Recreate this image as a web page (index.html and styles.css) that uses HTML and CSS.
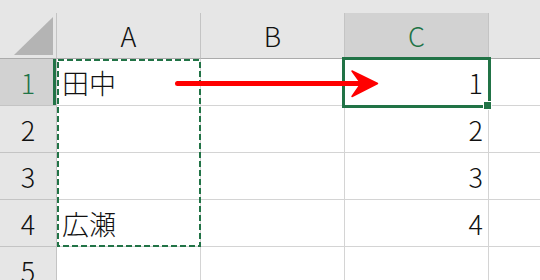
FILE: index.html
```html
<!DOCTYPE html>
<html lang="ja">
<head>
    <meta charset="UTF-8">
    <title>Sheet1</title>
    <link rel="stylesheet" href="styles.css">
</head>
<body>
    <div class="sheet">
        <div class="top-strip"></div>
        <div class="grid">
            <div class="corner">
                <svg width="56" height="45" viewBox="0 0 56 45">
                    <polygon points="53,4 53,42 14,42" fill="#b4b4b4"/>
                </svg>
            </div>
            <div class="col-head">A</div>
            <div class="col-head">B</div>
            <div class="col-head active">C</div>
            <div class="col-head last"></div>

            <div class="row-head active">1</div>
            <div class="cell">田中</div>
            <div class="cell"></div>
            <div class="cell num">1</div>
            <div class="cell last"></div>

            <div class="row-head">2</div>
            <div class="cell"></div>
            <div class="cell"></div>
            <div class="cell num">2</div>
            <div class="cell last"></div>

            <div class="row-head">3</div>
            <div class="cell"></div>
            <div class="cell"></div>
            <div class="cell num">3</div>
            <div class="cell last"></div>

            <div class="row-head">4</div>
            <div class="cell">広瀬</div>
            <div class="cell"></div>
            <div class="cell num">4</div>
            <div class="cell last"></div>

            <div class="row-head">5</div>
            <div class="cell"></div>
            <div class="cell"></div>
            <div class="cell"></div>
            <div class="cell last"></div>
        </div>

        <!-- copy range, active cell and the arrow between them -->
        <svg class="overlay" width="540" height="280" viewBox="0 0 540 280">
            <rect x="58" y="60" width="142" height="186" fill="none" stroke="#217346" stroke-width="2" stroke-dasharray="6 3"/>
            <rect x="343.5" y="58.5" width="146" height="48" fill="none" stroke="#217346" stroke-width="3"/>
            <rect x="483.5" y="101.5" width="8" height="8" fill="#217346" stroke="#fff" stroke-width="1"/>
            <line x1="177.5" y1="83.5" x2="362" y2="83.5" stroke="#ff0000" stroke-width="5" stroke-linecap="round"/>
            <polygon points="352,71 377.5,83.5 352,96.5 361,83.5" fill="#ff0000" stroke="#ff0000" stroke-width="1.5" stroke-linejoin="round"/>
        </svg>
    </div>
</body>
</html>
```

FILE: styles.css
```css
body {
    margin: 0;
    background: #fff;
    font-family: "Noto Sans CJK JP", "Noto Sans", sans-serif;
    font-weight: 300;
    color: #111;
}

.sheet {
    position: relative;
    width: 540px;
    height: 280px;
    overflow: hidden;
}

.top-strip {
    height: 13px;
    background: #e6e6e6;
}

.grid {
    display: grid;
    grid-template-columns: 57px 144px 144px 144px 1fr;
    grid-template-rows: 46px repeat(5, 47px);
}

.grid > div {
    box-sizing: border-box;
    display: flex;
    align-items: center;
    font-size: 27px;
    line-height: 1;
}

.corner {
    background: #e6e6e6;
    border-right: 1px solid #c4c4c4;
    border-bottom: 1px solid #ababab;
}

.corner svg {
    display: block;
}

.col-head {
    justify-content: center;
    background: #e6e6e6;
    border-right: 1px solid #c4c4c4;
    border-bottom: 1px solid #ababab;
}

.col-head.active {
    background: #d2d2d2;
    color: #217346;
}

.row-head {
    justify-content: center;
    background: #e6e6e6;
    border-right: 1px solid #c4c4c4;
    border-bottom: 1px solid #c4c4c4;
}

.row-head.active {
    background: #d2d2d2;
    color: #217346;
    box-shadow: inset -3px 0 #217346;
}

.cell {
    padding: 0 5px;
    background: #fff;
    border-right: 1px solid #d4d4d4;
    border-bottom: 1px solid #d4d4d4;
}

.cell.num {
    justify-content: flex-end;
}

.last {
    border-right: none;
}

.overlay {
    position: absolute;
    top: 0;
    left: 0;
}
```
